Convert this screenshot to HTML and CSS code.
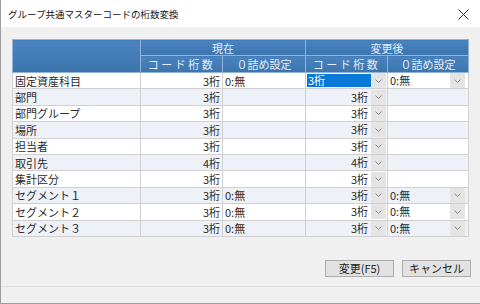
FILE: index.html
```html
<!doctype html>
<html>
  <head>
    <meta charset="utf-8">
    <title>グループ共通マスターコードの桁数変換</title>
    <link rel="stylesheet" href="styles.css">
  </head>
  <body>
    <div class="window">
      <div class="titlebar">
        <div class="title">グループ共通マスターコードの桁数変換</div>
        <div class="close">
          <svg width="11" height="11" viewBox="0 0 11 11"><path d="M0.5 0.5 L10.5 10.5 M10.5 0.5 L0.5 10.5" stroke="#2b2b2b" stroke-width="1" fill="none"/></svg>
        </div>
      </div>

      <div class="content">
        <table class="grid">
          <colgroup>
            <col class="c-name">
            <col class="c-code">
            <col class="c-zero">
            <col class="c-code">
            <col class="c-zero2">
          </colgroup>
          <thead>
            <tr class="h1">
              <th rowspan="2"></th>
              <th colspan="2">現在</th>
              <th colspan="2">変更後</th>
            </tr>
            <tr class="h2">
              <th class="spaced">コード桁数</th>
              <th>０詰め設定</th>
              <th class="spaced">コード桁数</th>
              <th>０詰め設定</th>
            </tr>
          </thead>
          <tbody>
            <tr>
              <td class="name">固定資産科目</td>
              <td class="num">3桁</td>
              <td class="txt">0:無</td>
              <td class="cb"><div class="combo"><span class="val editing">3桁</span><span class="drop"><svg width="7" height="4" viewBox="0 0 7 4"><path d="M0.5 0.5 L3.5 3.5 L6.5 0.5" stroke="#8a8a8a" fill="none"/></svg></span></div></td>
              <td class="cb last"><div class="combo"><span class="val left">0:無</span><span class="drop"><svg width="7" height="4" viewBox="0 0 7 4"><path d="M0.5 0.5 L3.5 3.5 L6.5 0.5" stroke="#8a8a8a" fill="none"/></svg></span></div></td>
            </tr>
            <tr>
              <td class="name">部門</td>
              <td class="num">3桁</td>
              <td class="txt"></td>
              <td class="cb"><div class="combo"><span class="val">3桁</span><span class="drop"><svg width="7" height="4" viewBox="0 0 7 4"><path d="M0.5 0.5 L3.5 3.5 L6.5 0.5" stroke="#8a8a8a" fill="none"/></svg></span></div></td>
              <td class="last"></td>
            </tr>
            <tr>
              <td class="name">部門グループ</td>
              <td class="num">3桁</td>
              <td class="txt"></td>
              <td class="cb"><div class="combo"><span class="val">3桁</span><span class="drop"><svg width="7" height="4" viewBox="0 0 7 4"><path d="M0.5 0.5 L3.5 3.5 L6.5 0.5" stroke="#8a8a8a" fill="none"/></svg></span></div></td>
              <td class="last"></td>
            </tr>
            <tr>
              <td class="name">場所</td>
              <td class="num">3桁</td>
              <td class="txt"></td>
              <td class="cb"><div class="combo"><span class="val">3桁</span><span class="drop"><svg width="7" height="4" viewBox="0 0 7 4"><path d="M0.5 0.5 L3.5 3.5 L6.5 0.5" stroke="#8a8a8a" fill="none"/></svg></span></div></td>
              <td class="last"></td>
            </tr>
            <tr>
              <td class="name">担当者</td>
              <td class="num">3桁</td>
              <td class="txt"></td>
              <td class="cb"><div class="combo"><span class="val">3桁</span><span class="drop"><svg width="7" height="4" viewBox="0 0 7 4"><path d="M0.5 0.5 L3.5 3.5 L6.5 0.5" stroke="#8a8a8a" fill="none"/></svg></span></div></td>
              <td class="last"></td>
            </tr>
            <tr>
              <td class="name">取引先</td>
              <td class="num">4桁</td>
              <td class="txt"></td>
              <td class="cb"><div class="combo"><span class="val">4桁</span><span class="drop"><svg width="7" height="4" viewBox="0 0 7 4"><path d="M0.5 0.5 L3.5 3.5 L6.5 0.5" stroke="#8a8a8a" fill="none"/></svg></span></div></td>
              <td class="last"></td>
            </tr>
            <tr>
              <td class="name">集計区分</td>
              <td class="num">3桁</td>
              <td class="txt"></td>
              <td class="cb"><div class="combo"><span class="val">3桁</span><span class="drop"><svg width="7" height="4" viewBox="0 0 7 4"><path d="M0.5 0.5 L3.5 3.5 L6.5 0.5" stroke="#8a8a8a" fill="none"/></svg></span></div></td>
              <td class="last"></td>
            </tr>
            <tr>
              <td class="name">セグメント１</td>
              <td class="num">3桁</td>
              <td class="txt">0:無</td>
              <td class="cb"><div class="combo"><span class="val">3桁</span><span class="drop"><svg width="7" height="4" viewBox="0 0 7 4"><path d="M0.5 0.5 L3.5 3.5 L6.5 0.5" stroke="#8a8a8a" fill="none"/></svg></span></div></td>
              <td class="cb last"><div class="combo"><span class="val left">0:無</span><span class="drop"><svg width="7" height="4" viewBox="0 0 7 4"><path d="M0.5 0.5 L3.5 3.5 L6.5 0.5" stroke="#8a8a8a" fill="none"/></svg></span></div></td>
            </tr>
            <tr>
              <td class="name">セグメント２</td>
              <td class="num">3桁</td>
              <td class="txt">0:無</td>
              <td class="cb"><div class="combo"><span class="val">3桁</span><span class="drop"><svg width="7" height="4" viewBox="0 0 7 4"><path d="M0.5 0.5 L3.5 3.5 L6.5 0.5" stroke="#8a8a8a" fill="none"/></svg></span></div></td>
              <td class="cb last"><div class="combo"><span class="val left">0:無</span><span class="drop"><svg width="7" height="4" viewBox="0 0 7 4"><path d="M0.5 0.5 L3.5 3.5 L6.5 0.5" stroke="#8a8a8a" fill="none"/></svg></span></div></td>
            </tr>
            <tr>
              <td class="name">セグメント３</td>
              <td class="num">3桁</td>
              <td class="txt">0:無</td>
              <td class="cb"><div class="combo"><span class="val">3桁</span><span class="drop"><svg width="7" height="4" viewBox="0 0 7 4"><path d="M0.5 0.5 L3.5 3.5 L6.5 0.5" stroke="#8a8a8a" fill="none"/></svg></span></div></td>
              <td class="cb last"><div class="combo"><span class="val left">0:無</span><span class="drop"><svg width="7" height="4" viewBox="0 0 7 4"><path d="M0.5 0.5 L3.5 3.5 L6.5 0.5" stroke="#8a8a8a" fill="none"/></svg></span></div></td>
            </tr>
          </tbody>
        </table>

        <div class="buttons">
          <div class="btn">変更(F5)</div>
          <div class="btn">キャンセル</div>
        </div>
      </div>

      <div class="status"></div>
    </div>
  </body>
</html>
```

FILE: styles.css
```css
html, body {
    margin: 0;
    padding: 0;
}

body {
    width: 480px;
    height: 304px;
    overflow: hidden;
    background: #f0f0f0;
    font-family: "Noto Sans CJK JP", "Noto Sans", sans-serif;
    font-size: 11px;
    color: #2a2a2a;
}

.window {
    height: 304px;
    box-sizing: border-box;
    border-left: 1px solid #9e9e9e;
    border-bottom: 1px solid #9e9e9e;
    display: flex;
    flex-direction: column;
}

/* title bar */
.titlebar {
    height: 27px;
    flex-shrink: 0;
    background: #fff;
    display: flex;
    align-items: center;
    justify-content: space-between;
    padding: 0 11px 0 7px;
}
.title {
    font-size: 9.5px;
    line-height: 12px;
    color: #111;
}
.close {
    display: flex;
    margin-top: 1px;
}

/* body */
.content {
    flex: 1;
    padding: 12px 0 0 11px;
}

.grid {
    border-collapse: collapse;
    table-layout: fixed;
    width: 456px;
    border: 1px solid #ababab;
}
.c-name { width: 128px; }
.c-code { width: 82px; }
.c-zero { width: 83px; }
.c-zero2 { width: 81px; }

.grid th {
    background: linear-gradient(#4a84bf, #3c74ae);
    color: #e3ecf6;
    font-weight: normal;
    font-size: 11px;
    line-height: 12px;
    padding: 0;
    border: 1px solid #93b4d6;
    text-align: center;
}
.grid .h1 th { height: 15px; }
.grid .h2 th { height: 16px; }
.grid th.spaced { letter-spacing: 2.5px; }

.grid td {
    border: 1px solid #d0d0d0;
    padding: 0 2px;
    height: 15.4px;
    line-height: 12px;
    white-space: nowrap;
    overflow: hidden;
}
.grid tbody tr:nth-child(odd) td { background: #fff; }
.grid tbody tr:nth-child(even) td { background: #eef2f8; }

.grid td.name { padding-left: 2px; }
.grid td.num { text-align: right; padding-right: 2px; }
.grid td.txt { padding-left: 2px; }
.grid td.cb { padding: 0; }
.grid td.cb.last { padding-right: 2px; }

.combo {
    display: flex;
    align-items: stretch;
    height: 15px;
}
.combo .val {
    flex: 1;
    text-align: right;
    padding-right: 3px;
    line-height: 15px;
}
.combo .val.left {
    text-align: left;
    padding-left: 2px;
}
.combo .val.editing {
    background: #0a78d7;
    color: #fff;
    text-align: left;
    padding-left: 1px;
    margin: 1px 0 1px 1px;
    line-height: 13px;
}
.combo .drop {
    width: 15px;
    margin: 0 1px 0 0;
    background: #e4e4e4;
    display: flex;
    align-items: center;
    justify-content: center;
}

/* buttons */
.buttons {
    display: flex;
    justify-content: flex-end;
    gap: 8px;
    margin-top: 23px;
    padding-right: 9px;
}
.btn {
    width: 67px;
    height: 15px;
    line-height: 15px;
    text-align: center;
    background: #e1e1e1;
    border: 1px solid #adadad;
    font-size: 11px;
    color: #222;
}

.status {
    height: 16px;
    flex-shrink: 0;
    border-top: 1px solid #dcdcdc;
}
```
